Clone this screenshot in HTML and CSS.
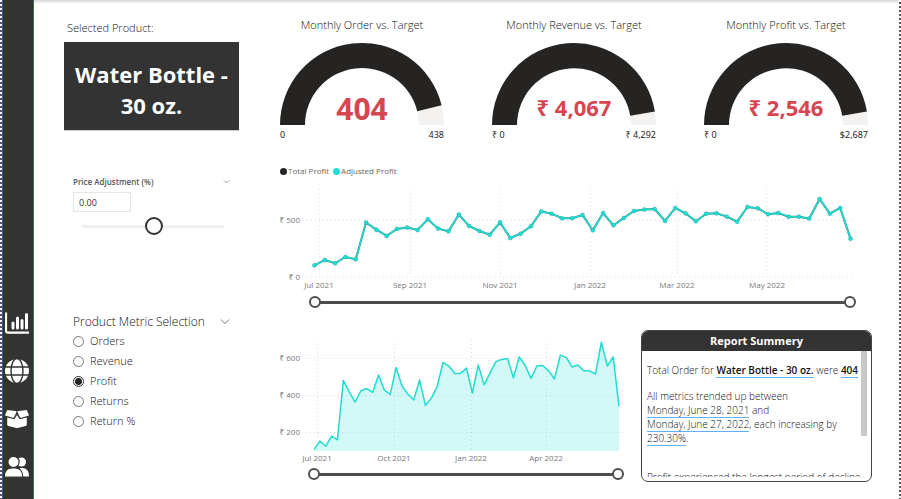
FILE: index.html
```html
<!DOCTYPE html>
<html lang="en">
<head>
<meta charset="utf-8">
<meta name="viewport" content="width=device-width, initial-scale=1">
<title>Product Detail</title>
<link rel="stylesheet" href="styles.css">
</head>
<body>
<nav class="sidebar" aria-label="Pages">
  <a href="#overview" aria-label="Overview">
    <svg viewBox="0 0 24 24"><path d="M1 1.5v18.2q0 2 2 2h21" fill="none" stroke="#fff" stroke-width="2.2"/><path d="M8 12v5M12.500 7v10M17 9.500v7.500M21.500 3.500v13.500" stroke="#fff" stroke-width="3" stroke-linecap="round"/></svg>
  </a>
  <a href="#map" aria-label="Map">
    <svg viewBox="0 0 24 24"><circle cx="12" cy="12" r="12" fill="#fff"/><g fill="none" stroke="#333" stroke-width="1.400"><ellipse cx="12" cy="12" rx="6" ry="12.500"/><path d="M0 8h24M0 16h24"/></g></svg>
  </a>
  <a href="#product" aria-label="Product">
    <svg viewBox="0 0 24 24"><path fill="#fff" d="M2.200 3 12 4.200 9 10.200q-.4.700-1.200.500L.8 8.800q-1-.3-.5-1.300zM21.800 3 12 4.200l3 6q.4.700 1.200.500l7-1.900q1-.3.500-1.300zM2.200 10.500l6 1.600q1.200.2 1.800-.8L12 8l2 3.300q.6 1 1.800.8l6-1.600v7q0 1.200-1.200 1.500L12.600 21q-.6.1-1.200 0l-8-2q-1.200-.3-1.200-1.500z"/><path d="M12 4.200v4" stroke="#333" stroke-width=".8"/></svg>
  </a>
  <a href="#customers" aria-label="Customers">
    <svg viewBox="0 0 24 24"><g fill="#fff"><circle cx="16.500" cy="7" r="4.500"/><path d="M15 13h3q6 .5 6 8.500h-8z"/></g><g fill="#fff" stroke="#333" stroke-width="1.200"><circle cx="8.500" cy="7" r="5.600"/><path d="M-.6 22.200v-1.500Q0 13 7 13h3q7 0 7.600 7.700v1.500z"/></g></svg>
  </a>
</nav>

<main class="report">
  <section class="controls">
    <h2 class="caption">Selected Product:</h2>
    <div class="product">Water Bottle - 30 oz.</div>

    <div class="slicer">
      <div class="slicer-head">
        <label class="slicer-title" for="adjust">Price Adjustment (%)</label>
        <button class="chevron small" type="button" aria-label="Expand price adjustment"><svg viewBox="0 0 10 6"><path d="M1 .5l4 4 4-4"/></svg></button>
      </div>
      <input class="number" id="adjust" type="text" value="0.00">
      <input class="slider" type="range" min="-100" max="100" value="2" aria-label="Price adjustment">
    </div>

    <div class="metrics" role="radiogroup" aria-labelledby="metrics-title">
      <div class="metrics-head">
        <span id="metrics-title">Product Metric Selection</span>
        <button class="chevron" type="button" aria-label="Expand metric selection"><svg viewBox="0 0 10 6"><path d="M1 .5l4 4 4-4"/></svg></button>
      </div>
      <label><input type="radio" name="metric">Orders</label>
      <label><input type="radio" name="metric">Revenue</label>
      <label><input type="radio" name="metric" checked>Profit</label>
      <label><input type="radio" name="metric">Returns</label>
      <label><input type="radio" name="metric">Return %</label>
    </div>
  </section>

  <section class="visuals">
    <div class="gauges">
      <article class="gauge">
        <h3>Monthly Order vs. Target</h3>
        <svg viewBox="0 0 164 82">
          <path class="rest" d="M0 82A82 82 0 0 1 164 82H139A57 57 0 0 0 25 82z"/>
          <path class="fill" d="M0 82A82 82 0 0 1 161.600 62.200L137.300 68.200A57 57 0 0 0 25 82z"/>
          <text class="big" x="82" y="77">404</text>
        </svg>
        <div class="ends"><span>0</span><span>438</span></div>
      </article>
      <article class="gauge">
        <h3>Monthly Revenue vs. Target</h3>
        <svg viewBox="0 0 164 82">
          <path class="rest" d="M0 82A82 82 0 0 1 164 82H139A57 57 0 0 0 25 82z"/>
          <path class="fill" d="M0 82A82 82 0 0 1 162.900 68.600L138.200 72.700A57 57 0 0 0 25 82z"/>
          <text x="82" y="73">₹ 4,067</text>
        </svg>
        <div class="ends"><span>₹ 0</span><span>₹ 4,292</span></div>
      </article>
      <article class="gauge">
        <h3>Monthly Profit vs. Target</h3>
        <svg viewBox="0 0 164 82">
          <path class="rest" d="M0 82A82 82 0 0 1 164 82H139A57 57 0 0 0 25 82z"/>
          <path class="fill" d="M0 82A82 82 0 0 1 162.900 68.600L138.200 72.700A57 57 0 0 0 25 82z"/>
          <text x="82" y="73">₹ 2,546</text>
        </svg>
        <div class="ends"><span>₹ 0</span><span>$2,687</span></div>
      </article>
    </div>

    <div class="trend">
      <div class="legend"><span class="key total">Total Profit</span><span class="key adjusted">Adjusted Profit</span></div>
      <svg class="chart" id="trend" viewBox="0 0 593 110">
        <g class="grid">
          <path d="M28 38H575M28 95H575"/>
          <path d="M40.500 7V95M131.500 7V95M221.500 7V95M311.500 7V95M398.500 7V95M487.500 7V95"/>
        </g>
        <g class="axis-y"><text x="21" y="41">₹ 500</text><text x="21" y="98">₹ 0</text></g>
        <g class="axis-x"><text x="40" y="106">Jul 2021</text><text x="131" y="106">Sep 2021</text><text x="221" y="106">Nov 2021</text><text x="311" y="106">Jan 2022</text><text x="398" y="106">Mar 2022</text><text x="488" y="106">May 2022</text></g>
      </svg>
      <div class="range wide">
        <input type="range" value="0" aria-label="Trend start">
        <input type="range" value="100" aria-label="Trend end">
      </div>
    </div>

    <div class="lower">
      <div class="area">
        <svg class="chart" id="area" viewBox="0 0 352 136">
          <g class="grid">
            <path d="M27 28.500H345M27 65.500H345M27 102.500H345"/>
            <path d="M38.500 10V121M115.500 10V121M192.500 10V121M267.500 10V121"/>
          </g>
          <g class="axis-y"><text x="21" y="31">₹ 600</text><text x="21" y="68">₹ 400</text><text x="21" y="105">₹ 200</text></g>
          <g class="axis-x"><text x="38" y="131">Jul 2021</text><text x="115" y="131">Oct 2021</text><text x="192" y="131">Jan 2022</text><text x="267" y="131">Apr 2022</text></g>
        </svg>
        <div class="range narrow">
          <input type="range" value="0" aria-label="Area start">
          <input type="range" value="100" aria-label="Area end">
        </div>
      </div>

      <article class="summary">
        <h3>Report Summery</h3>
        <div class="summary-body">
          <div class="summary-text">
            <p>Total Order for <b class="value">Water Bottle - 30 oz.</b> were <b class="value">404</b></p>
            <p>All metrics trended up between <br><span class="value">Monday, June 28, 2021</span> and <br><span class="value">Monday, June 27, 2022</span>, each increasing by <br><span class="value">230.30%</span>.</p>
            <p class="next">Profit experienced the longest period of decline</p>
          </div>
          <div class="bar"><div class="thumb"></div></div>
        </div>
      </article>
    </div>
  </section>
</main>
<div class="edge"></div>
<script src="script.js"></script>
</body>
</html>
```
FILE: styles.css
```css
* { box-sizing: border-box; }

body {
  margin: 0;
  min-height: 100vh;
  display: flex;
  overflow: hidden;
  background: #fff;
  color: #111;
  font-family: "Open Sans", "Noto Sans", sans-serif;
  font-size: 11px;
  font-weight: 300;
  line-height: 16px;
}

h2, h3, p { margin: 0; font-size: inherit; font-weight: inherit; }
svg { display: block; }

body::before, .edge {
  content: "";
  flex: none;
  width: 2px;
  background: repeating-linear-gradient(#fff 0 2px, #555 2px 4px);
}

.sidebar {
  flex: none;
  width: 32px;
  padding: 0 2px 20px 0;
  display: flex;
  flex-direction: column;
  justify-content: flex-end;
  align-items: center;
  gap: 24px;
  background: #333;
  border: solid #2f5f96;
  border-width: 0 1px;
}
.sidebar svg { width: 24px; height: 24px; }

.report {
  flex: 1;
  min-width: 0;
  display: grid;
  grid-template-columns: 175px minmax(0, 1fr);
  gap: 40px;
  padding: 0 27px 0 30px;
  background: linear-gradient(#d8d8d8, #fff 4px);
}

/* Left column */
.controls { padding-top: 20px; }
.caption { padding-left: 3px; }
.product {
  margin-top: 6px;
  padding: 17px 8px 9px;
  background: #333;
  border-bottom: 1px solid #ccc;
  color: #fff;
  font-size: 22px;
  font-weight: 700;
  line-height: 31px;
  text-align: center;
}

.slicer { margin-top: 43px; padding: 0 9px; }
.slicer-head, .metrics-head {
  display: flex;
  align-items: center;
  justify-content: space-between;
}
.slicer-title { font-size: 8px; font-weight: 600; color: #555; }
.number {
  display: block;
  width: 58px;
  height: 20px;
  margin-top: 2px;
  padding: 0 5px;
  border: 1px solid #e6e6e6;
  color: #333;
  font: 9px "Open Sans", sans-serif;
}

input[type="range"] {
  appearance: none;
  display: block;
  margin: 0;
  background: none;
}
.slicer .slider { width: 142px; height: 20px; margin: 4px 0 0 9px; }
.slider::-webkit-slider-runnable-track { height: 3px; background: #f0f0f0; }
.slider::-webkit-slider-thumb {
  appearance: none;
  width: 18px;
  height: 18px;
  margin-top: -8px;
  border: 2px solid #333;
  border-radius: 50%;
  background: #fff;
}

.chevron { padding: 0; border: 0; background: none; }
.chevron svg { width: 10px; height: 6px; fill: none; stroke: #777; }
.chevron.small svg { width: 7px; height: 4px; }

.metrics { margin-top: 77px; padding: 0 9px; }
.metrics-head { height: 18px; font-size: 12px; }
.metrics label { display: flex; align-items: center; gap: 6px; height: 20px; }
.metrics input {
  appearance: none;
  width: 11px;
  height: 11px;
  margin: 0;
  border: 1px solid #777;
  border-radius: 50%;
}
.metrics input:checked {
  border-color: #333;
  background: radial-gradient(circle, #222 0 3px, #fff 4px);
}

/* Gauges */
.visuals { padding-top: 17px; }
.gauges {
  display: grid;
  grid-template-columns: repeat(3, 1fr);
  gap: 48px;
  padding: 0 4px 0 1px;
}
.gauge h3 { text-align: center; white-space: nowrap; }
.gauge svg { width: 100%; margin-top: 10px; overflow: visible; }
.gauge .rest { fill: #f3f2f1; }
.gauge .fill { fill: #252423; }
.gauge text {
  fill: #d64550;
  font-size: 22px;
  font-weight: 700;
  text-anchor: middle;
}
.gauge .big { font-size: 30px; }
.ends {
  display: flex;
  justify-content: space-between;
  margin-top: 2px;
  color: #252423;
  font-family: "Noto Sans", sans-serif;
  font-size: 9px;
  font-weight: 400;
}

/* Charts */
.trend { margin-top: 20px; }
.legend {
  display: flex;
  gap: 4px;
  padding-left: 1px;
  color: #666;
  font-size: 8px;
  font-weight: 400;
}
.key { display: flex; align-items: center; gap: 1px; }
.key::before {
  content: "";
  width: 7px;
  height: 7px;
  border-radius: 50%;
  background: #252423;
}
.key.adjusted::before { background: #1fe0d4; }
.chart { width: 100%; margin-top: 3px; }
.chart text { font-size: 8px; font-weight: 400; fill: #777; }
.axis-y { text-anchor: end; }
.axis-x { text-anchor: middle; }
.grid { fill: none; stroke: #ddd; stroke-dasharray: 1 3; }
.total-line { fill: none; stroke: #3a807c; stroke-width: 2; }
.adjusted-line { fill: none; stroke: #20dcd0; stroke-width: 1.5; stroke-linejoin: round; }
.dot { fill: #1fe0d4; stroke: #28a9a1; stroke-width: .5; }
.area-fill { fill: #20e2d7; fill-opacity: .2; }

.range {
  display: grid;
  align-items: center;
  background: linear-gradient(#4d4d4d, #4d4d4d) center / calc(100% - 12px) 3px no-repeat;
}
.range.wide { margin: 4px 16px 0 30px; }
.range.narrow { margin: 2px 7px 0 29px; }
.range input { grid-area: 1 / 1; width: 100%; height: 12px; pointer-events: none; }
.range input::-webkit-slider-thumb {
  appearance: none;
  width: 12px;
  height: 12px;
  border: 2px solid #4d4d4d;
  border-radius: 50%;
  background: #fff;
  pointer-events: auto;
}

.lower {
  display: grid;
  grid-template-columns: minmax(0, 1fr) 231px;
  gap: 10px;
  margin-top: 19px;
  align-items: start;
}

/* Narrative */
.summary {
  height: 152px;
  margin-top: 3px;
  display: flex;
  flex-direction: column;
  overflow: hidden;
  border: 1px solid #444;
  border-radius: 7px;
}
.summary h3 {
  flex: none;
  background: #333;
  color: #fff;
  font-weight: 700;
  line-height: 20px;
  text-align: center;
}
.summary-body { flex: 1; min-height: 0; display: flex; margin-bottom: 4px; padding-right: 4px; }
.summary-text {
  flex: 1;
  min-width: 0;
  overflow: hidden;
  padding: 12px 0 0 5px;
  font-size: 10px;
  line-height: 14px;
  white-space: nowrap;
}
.summary-text p + p { margin-top: 12px; }
.summary-text p + .next { margin-top: 25px; }
.summary-text b { font-weight: 600; }
.value { border-bottom: 1px solid #5fb0f7; }
.bar { width: 6px; }
.thumb { height: 85px; background: #c8c8c8; }
```
FILE: script.js
```js
const profit = [
  105, 152, 123, 178, 158, 480, 418, 363, 424, 436, 415, 509, 427, 404,
  550, 450, 406, 374, 482, 345, 383, 447, 578, 558, 518, 518, 547, 412,
  564, 456, 520, 582, 594, 599, 494, 608, 561, 491, 558, 561, 532, 488,
  617, 605, 553, 564, 532, 532, 515, 687, 558, 608, 339
];

function add(svg, name, attributes) {
  const node = document.createElementNS("http://www.w3.org/2000/svg", name);
  for (const key in attributes) node.setAttribute(key, attributes[key]);
  svg.append(node);
}

function scale(left, right, zero, perUnit) {
  return profit.map((value, i) => [
    left + (right - left) * i / (profit.length - 1),
    zero - value * perUnit
  ]);
}

const trend = document.getElementById("trend");
const line = scale(35.5, 571.5, 95.3, 0.114);
add(trend, "polyline", { class: "total-line", points: line.join(" ") });
add(trend, "polyline", { class: "adjusted-line", points: line.join(" ") });
line.forEach(([x, y]) => add(trend, "circle", { class: "dot", cx: x, cy: y, r: 2 }));

const area = document.getElementById("area");
const edge = scale(35, 340, 139, 0.1845);
add(area, "polygon", { class: "area-fill", points: "35,121 " + edge.join(" ") + " 340,121" });
add(area, "polyline", { class: "adjusted-line", points: edge.join(" ") });
```
